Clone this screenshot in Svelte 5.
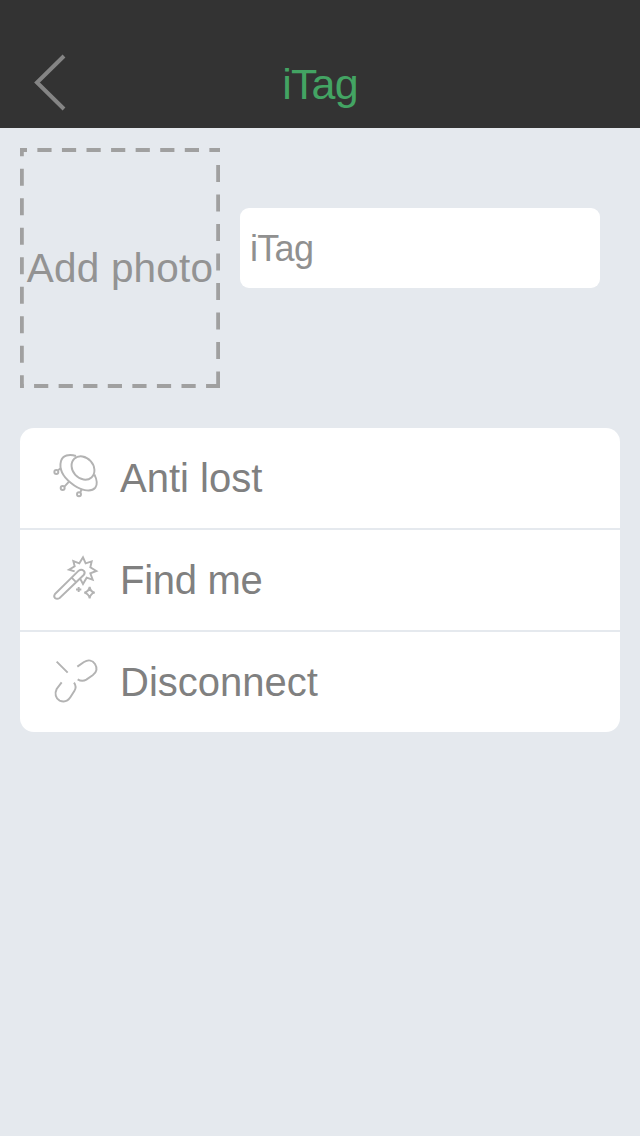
<script lang="ts">
	let name = $state('iTag');

	const actions = [
		{ icon: 'ufo', label: 'Anti lost' },
		{ icon: 'wand', label: 'Find me' },
		{ icon: 'unlink', label: 'Disconnect' }
	];
</script>

<div class="screen">
	<header class="navbar">
		<button class="back" aria-label="Back">
			<svg width="34" height="58" viewBox="0 0 34 58">
				<path d="M31 2 4 28.500l27 26.500" />
			</svg>
		</button>
		<h1>iTag</h1>
	</header>

	<section class="profile">
		<button class="photo">
			<svg class="frame" viewBox="0 0 200 240">
				<path class="across" d="M0 2H200" stroke-dashoffset="7.2" />
				<path class="across" d="M0 238H200" stroke-dashoffset="10.5" />
				<path class="down" d="M1.900 0V240" stroke-dashoffset="8.7" />
				<path class="down" d="M198.100 17V240" />
			</svg>
			<span>Add photo</span>
		</button>
		<input class="name" type="text" aria-label="Name" bind:value={name} />
	</section>

	<ul class="actions">
		{#each actions as action}
			<li>
				{#if action.icon === 'ufo'}
					<svg class="icon" viewBox="0 10 210 180">
						<path d="M108 34C87 27 68 32 63 49C57 72 69 96 93 115C119 137 153 145 166 129C173 119 170 103 163 89" />
						<ellipse cx="129" cy="70" rx="38" ry="31" transform="rotate(48 129 70)" />
						<path d="M63 70l-9 7M87 111l-13 14M126 133l-5 9" />
						<circle cx="49" cy="82" r="6" />
						<circle cx="68" cy="130" r="6" />
						<circle cx="117" cy="149" r="6" />
					</svg>
				{:else if action.icon === 'wand'}
					<svg class="icon" viewBox="0 6 210 180">
						<path d="M45 138 116 68Q124 62 131 68Q137 74 131 81L59 150Q51 155 45 150Q40 145 45 138ZM95 89l14 14" />
						<path d="M104 70 87 65l17-10-4-16 18 7 11-18 8 18 18-6-4 18 18 11-18 7 7 19-18-6-11 19-9-17" />
						<path d="M149 117q2 14 15 17q-13 3-15 17q-3-14-16-17q13-3 16-17Z" />
						<path d="M116 117v15M108 124.500h16" />
					</svg>
				{:else}
					<svg class="icon" viewBox="0 6 210 180">
						<path d="M50 35 83 68M112 50 132 36C145 28 158 31 165 42C173 55 170 67 158 76L139 89C130 94 121 93 113 88" />
						<path d="M65 97 50 117C43 131 47 145 59 152C72 157 84 153 91 142L103 123C109 114 107 105 102 98" />
					</svg>
				{/if}
				<span class={action.icon}>{action.label}</span>
			</li>
		{/each}
	</ul>
</div>

<style>
	:global(body) {
		background: #e5e9ee;
	}

	.screen {
		min-height: 1136px;
		background: #e5e9ee;
		font-family: 'Liberation Sans', Arial, sans-serif;
	}

	.navbar {
		display: grid;
		grid-template-columns: 100px 1fr 100px;
		height: 88px;
		padding-top: 40px;
		background: #333;
	}

	button {
		border: 0;
		padding: 0;
		background: none;
		font: inherit;
	}

	.back {
		display: flex;
		align-items: center;
		padding: 0 0 2px 33px;
	}

	.back path {
		fill: none;
		stroke: #858585;
		stroke-width: 4;
	}

	h1 {
		margin: 0;
		font-size: 43px;
		font-weight: 400;
		line-height: 88px;
		letter-spacing: -0.8px;
		text-align: center;
		color: #43a463;
	}

	.profile {
		display: flex;
		align-items: flex-start;
		gap: 20px;
		padding: 20px;
	}

	.photo {
		display: grid;
		flex: none;
		width: 200px;
		height: 240px;
		place-items: center;
		font-size: 40.5px;
		letter-spacing: 0.2px;
		white-space: nowrap;
		color: #939393;
	}

	.photo > * {
		grid-area: 1 / 1;
	}

	.frame {
		width: 200px;
		height: 240px;
	}

	.frame path {
		fill: none;
		stroke: #a0a0a0;
	}

	.frame .across {
		stroke-width: 4;
		stroke-dasharray: 14.2 10.37;
	}

	.frame .down {
		stroke-width: 3.8;
		stroke-dasharray: 17 12.5;
	}

	.name {
		box-sizing: border-box;
		width: 360px;
		height: 80px;
		margin-top: 60px;
		padding: 2px 10px 0;
		border: 0;
		border-radius: 9px;
		outline: 0;
		background: #fff;
		font-family: inherit;
		font-size: 36px;
		letter-spacing: -0.7px;
		color: #909090;
	}

	.actions {
		display: grid;
		gap: 2px;
		margin: 20px;
		padding: 0;
		border-radius: 14px;
		overflow: hidden;
		list-style: none;
	}

	.actions li {
		display: flex;
		align-items: center;
		gap: 10px;
		height: 100px;
		padding-left: 20px;
		background: #fff;
		font-size: 40px;
		color: #808080;
	}

	.wand {
		letter-spacing: -0.3px;
	}

	.icon {
		width: 70px;
		height: 60px;
		fill: none;
		stroke: #b3b3b3;
		stroke-width: 5.8;
	}
</style>
